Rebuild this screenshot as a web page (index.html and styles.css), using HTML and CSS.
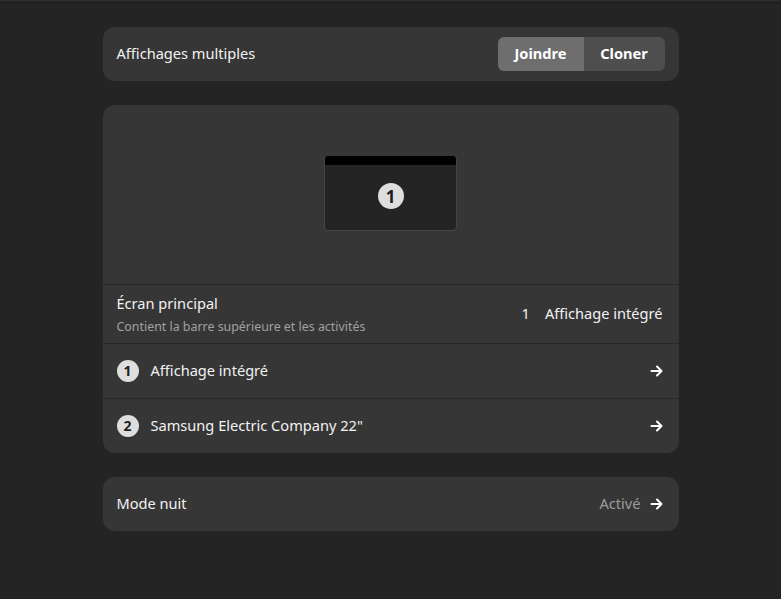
FILE: index.html
```html
<!DOCTYPE html>
<html lang="fr">
<head>
<meta charset="utf-8">
<link rel="stylesheet" href="styles.css">
</head>
<body>
<div class="topline"></div>
<main class="page">
  <section class="card row">
    <span class="title grow">Affichages multiples</span>
    <div class="linked">
      <button class="seg active">Joindre</button>
      <button class="seg">Cloner</button>
    </div>
  </section>

  <section class="card list">
    <div class="preview">
      <div class="monitor">
        <div class="mbar"></div>
        <div class="mbody"><span class="badge big">1</span></div>
      </div>
    </div>
    <div class="row primary">
      <div class="texts">
        <span class="title">Écran principal</span>
        <span class="subtitle">Contient la barre supérieure et les activités</span>
      </div>
      <div class="choice"><span class="num">1</span><span>Affichage intégré</span></div>
    </div>
    <div class="row item first">
      <span class="badge">1</span>
      <span class="title grow">Affichage intégré</span>
      <svg class="arrow" viewBox="0 0 14 14" width="14" height="14"><path d="M1.5 7h10M7 2.5 11.5 7 7 11.5" fill="none" stroke="#fff" stroke-width="2" stroke-linecap="round" stroke-linejoin="round"/></svg>
    </div>
    <div class="row item">
      <span class="badge">2</span>
      <span class="title grow">Samsung Electric Company 22"</span>
      <svg class="arrow" viewBox="0 0 14 14" width="14" height="14"><path d="M1.5 7h10M7 2.5 11.5 7 7 11.5" fill="none" stroke="#fff" stroke-width="2" stroke-linecap="round" stroke-linejoin="round"/></svg>
    </div>
  </section>

  <section class="card row">
    <span class="title grow">Mode nuit</span>
    <span class="status">Activé</span>
    <svg class="arrow" viewBox="0 0 14 14" width="14" height="14"><path d="M1.5 7h10M7 2.5 11.5 7 7 11.5" fill="none" stroke="#fff" stroke-width="2" stroke-linecap="round" stroke-linejoin="round"/></svg>
  </section>
</main>
</body>
</html>
```
FILE: styles.css
```css
html, body {
  margin: 0;
  padding: 0;
  background: #242424;
  font-family: "Noto Sans", "Open Sans", sans-serif;
  color: #ffffff;
  height: 100%;
}
.topline {
  height: 2px;
  background: #2a2a2a;
  border-bottom: 1px solid #1a1a1a;
}
.page {
  width: 576px;
  margin: 24px auto 0;
  display: flex;
  flex-direction: column;
  gap: 24px;
}
.card {
  background: #363636;
  border-radius: 12px;
  overflow: hidden;
}
.row {
  display: flex;
  align-items: center;
  padding: 0 15px 0 14px;
  height: 54px;
  box-sizing: border-box;
}
.title {
  font-size: 14.6px;
  color: #f2f2f2;
}
.row > .title, .status, .choice { margin-bottom: 2px; }
.grow { flex: 1; }
.linked {
  display: flex;
  border-radius: 6px;
  overflow: hidden;
  margin-right: -1px;
}
.seg {
  border: none;
  font-family: inherit;
  font-weight: 700;
  font-size: 14.6px;
  color: #ffffff;
  background: #4e4e4e;
  height: 34px;
  padding: 0 0 2px;
  margin: 0;
}
.seg.active {
  background: #6e6e6e;
  width: 86px;
}
.seg:not(.active) { width: 81px; }
.list { display: flex; flex-direction: column; }
.preview {
  height: 180px;
  flex: none;
  display: flex;
  justify-content: center;
  padding-top: 51px;
  box-sizing: border-box;
  border-bottom: 1px solid #282828;
}
.monitor {
  width: 133px;
  height: 75px;
  border-radius: 4px;
  overflow: hidden;
  background: #242424;
  box-sizing: border-box;
  border: 1px solid #454545;
  border-top: none;
  display: flex;
  flex-direction: column;
}
.mbar {
  height: 9px;
  background: #000;
}
.mbody {
  flex: 1;
  display: flex;
  align-items: center;
  justify-content: center;
  padding-bottom: 3px;
}
.badge {
  width: 22px;
  height: 22px;
  border-radius: 50%;
  background: #dedede;
  color: #1e1e1e;
  font-weight: 700;
  font-size: 14px;
  display: inline-flex;
  align-items: center;
  justify-content: center;
  margin-right: 12px;
  flex: none;
  line-height: 1;
}
.badge.big {
  width: 26px;
  height: 26px;
  font-size: 17px;
  margin: 0;
}
.primary {
  height: 59px;
  border-bottom: 1px solid #282828;
}
.texts {
  display: flex;
  flex-direction: column;
  flex: 1;
  gap: 5px;
}
.subtitle {
  font-size: 12.4px;
  color: #a0a0a0;
}
.choice {
  display: flex;
  gap: 15px;
  font-size: 14.6px;
  color: #f2f2f2;
  margin-right: 1px;
}
.item { height: 54px; }
.item.first {
  height: 55px;
  border-bottom: 1px solid #282828;
}
.arrow { flex: none; }
.status {
  font-size: 14.6px;
  color: #9c9c9c;
  margin-right: 9px;
}
```
